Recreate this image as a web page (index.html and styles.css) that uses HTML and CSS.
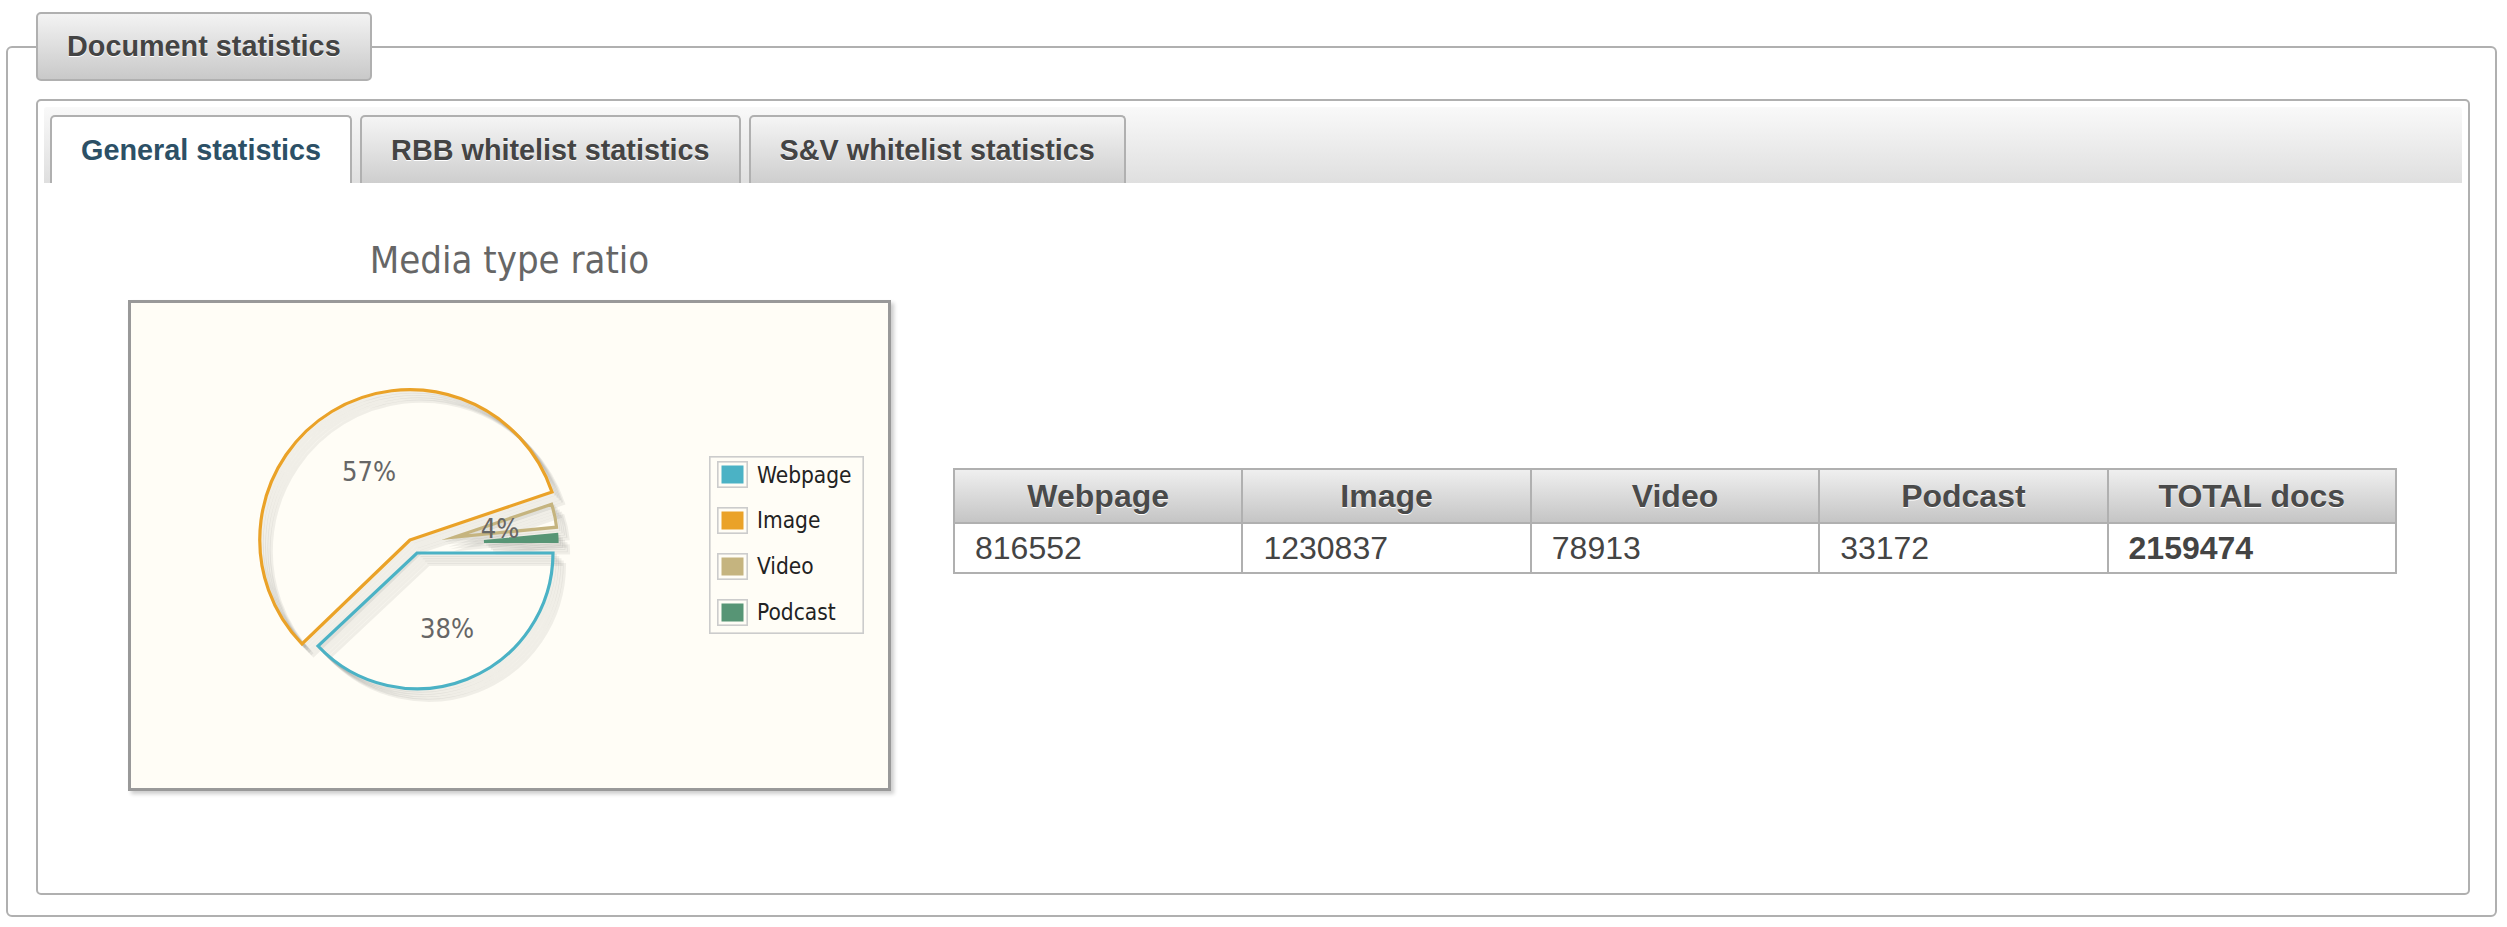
FILE: index.html
```html
<!DOCTYPE html>
<html lang="en">
<head>
<meta charset="utf-8">
<title>Document statistics</title>
<link rel="stylesheet" href="styles.css">
</head>
<body>
<fieldset class="group">
  <legend class="group-title">Document statistics</legend>
  <div class="tabs">
    <ul class="tab-nav">
      <li class="tab active">General statistics</li>
      <li class="tab">RBB whitelist statistics</li>
      <li class="tab">S&amp;V whitelist statistics</li>
    </ul>
    <div class="tab-panel">
      <div class="chart">
        <div class="chart-title">Media type ratio</div>
        <div class="chart-box">
          <svg class="chart-svg" width="757" height="485" viewBox="131 303 757 485" xmlns="http://www.w3.org/2000/svg">
            <defs>
              <path id="sWeb" d="M417 553 L553 553 A136 136 0 0 1 318 646 Z"/>
              <path id="sImg" d="M410 540 L552 492 A150 150 0 1 0 302 644 Z"/>
              <path id="sVid" d="M455 537 L551.6 504.3 A102 102 0 0 1 556.5 527.2 Z"/>
              <path id="sPod" d="M484 541.5 L556.7 534.5 A73 73 0 0 1 557 541.5 Z"/>
            </defs>
            <g class="pie-shadow">
              <g transform="translate(2.3 2.3)"><use href="#sWeb"/><use href="#sImg"/><use href="#sVid"/><use href="#sPod"/></g>
              <g transform="translate(4.6 4.6)"><use href="#sWeb"/><use href="#sImg"/><use href="#sVid"/><use href="#sPod"/></g>
              <g transform="translate(6.9 6.9)"><use href="#sWeb"/><use href="#sImg"/><use href="#sVid"/><use href="#sPod"/></g>
              <g transform="translate(9.2 9.2)"><use href="#sWeb"/><use href="#sImg"/><use href="#sVid"/><use href="#sPod"/></g>
              <g transform="translate(11.5 11.5)"><use href="#sWeb"/><use href="#sImg"/><use href="#sVid"/><use href="#sPod"/></g>
            </g>
            <g class="pie-slices">
              <use href="#sWeb" class="c-web"/>
              <use href="#sImg" class="c-img"/>
              <use href="#sVid" class="c-vid"/>
              <use href="#sPod" class="c-pod fill-pod"/>
            </g>
            <g class="pie-labels">
              <text x="369" y="481">57%</text>
              <text x="447" y="638">38%</text>
              <text x="500" y="538">4%</text>
            </g>
            <g class="legend">
              <rect class="legend-frame" x="709.8" y="456.8" width="153.4" height="176.4"/>
              <rect class="swatch-frame" x="717.8" y="461.8" width="29.4" height="25.4"/>
              <rect x="721.5" y="465.5" width="22" height="18" fill="#4bb2c5"/>
              <text class="legend-text" x="757" y="483">Webpage</text>
              <rect class="swatch-frame" x="717.8" y="507.8" width="29.4" height="25.4"/>
              <rect x="721.5" y="511.5" width="22" height="18" fill="#eaa228"/>
              <text class="legend-text" x="757" y="528">Image</text>
              <rect class="swatch-frame" x="717.8" y="553.8" width="29.4" height="25.4"/>
              <rect x="721.5" y="557.5" width="22" height="18" fill="#c5b47f"/>
              <text class="legend-text" x="757" y="574">Video</text>
              <rect class="swatch-frame" x="717.8" y="599.8" width="29.4" height="25.4"/>
              <rect x="721.5" y="603.5" width="22" height="18" fill="#579575"/>
              <text class="legend-text" x="757" y="620">Podcast</text>
            </g>
          </svg>
        </div>
      </div>
      <table class="stats">
        <thead>
          <tr><th>Webpage</th><th>Image</th><th>Video</th><th>Podcast</th><th>TOTAL docs</th></tr>
        </thead>
        <tbody>
          <tr><td>816552</td><td>1230837</td><td>78913</td><td>33172</td><td class="total">2159474</td></tr>
        </tbody>
      </table>
    </div>
  </div>
</fieldset>
</body>
</html>
```

FILE: styles.css
```css
html, body {
  margin: 0;
  padding: 0;
  background: #fff;
}

body {
  font-family: "Liberation Sans", Arial, sans-serif;
  color: #444;
}

.group {
  margin: 12px 10px 10px 6px;
  padding: 18px 25px 20px 28px;
  border: 2px solid #b0b0b0;
  border-radius: 6px;
  min-width: 0;
}

.group-title {
  padding: 0 29px;
  border: 2px solid #b0b0b0;
  border-radius: 5px;
  background: linear-gradient(#f3f3f3, #c9c9c9);
  font-size: 28.8px;
  font-weight: bold;
  line-height: 65px;
  color: #444;
  text-shadow: 0 1px 0 #fff;
}

.tabs {
  border: 2px solid #b0b0b0;
  border-radius: 5px;
  padding: 6px;
  background: #fff;
}

.tab-nav {
  list-style: none;
  margin: 0;
  padding: 8px 0 0 6px;
  display: flex;
  gap: 8px;
  background: linear-gradient(#f9f9f9, #dfdfdf);
  border-radius: 3px 3px 0 0;
}

.tab {
  box-sizing: border-box;
  height: 68px;
  padding: 0 29px;
  border: 2px solid #b0b0b0;
  border-bottom: 0;
  border-radius: 5px 5px 0 0;
  background: linear-gradient(#f5f5f5, #cecece);
  font-size: 28.8px;
  font-weight: bold;
  line-height: 66px;
  color: #444;
  text-shadow: 0 1px 0 #fff;
  white-space: nowrap;
}

.tab.active {
  background: #fff;
  color: #2c5066;
  text-shadow: none;
}

.tab-panel {
  display: flex;
  align-items: center;
  padding: 55px 0 96px 84px;
}

.chart {
  flex: none;
  width: 763px;
}

.chart-title {
  font-family: "DejaVu Sans Condensed", "DejaVu Sans", sans-serif;
  font-stretch: condensed;
  font-size: 38px;
  line-height: 44px;
  color: #666;
  text-align: center;
  margin-bottom: 18px;
}

.chart-box {
  box-sizing: border-box;
  width: 763px;
  height: 491px;
  border: 3px solid #999;
  background: #fffdf6;
  box-shadow: 3px 3px 4px rgba(0, 0, 0, 0.2);
}

.chart-svg {
  display: block;
}

.pie-shadow {
  fill: none;
  stroke: rgba(0, 0, 0, 0.06);
  stroke-width: 3.2;
  stroke-linejoin: miter;
  stroke-miterlimit: 10;
}

.pie-slices use {
  fill: none;
  stroke-width: 3.2;
  stroke-linejoin: miter;
  stroke-miterlimit: 10;
}

.c-web { stroke: #4bb2c5; }
.c-img { stroke: #eaa228; }
.c-vid { stroke: #c5b47f; }
.c-pod { stroke: #579575; }
.pie-slices .fill-pod { fill: #579575; }

.pie-labels text {
  font-family: "DejaVu Sans Condensed", "DejaVu Sans", sans-serif;
  font-stretch: condensed;
  font-size: 27px;
  fill: #666;
  text-anchor: middle;
}

.legend-frame,
.swatch-frame {
  fill: none;
  stroke: #ccc;
  stroke-width: 1.6;
}

.legend-text {
  font-family: "DejaVu Sans Condensed", "DejaVu Sans", sans-serif;
  font-stretch: condensed;
  font-size: 22.5px;
  fill: #222;
}

.stats {
  flex: none;
  margin-left: 62px;
  margin-top: 13px;
  width: 1444px;
  table-layout: fixed;
  border-collapse: collapse;
  font-size: 32px;
  color: #444;
}

.stats th,
.stats td {
  border: 2px solid #b0b0b0;
}

.stats th {
  padding: 0;
  line-height: 52px;
  background: linear-gradient(#efefef, #c5c5c5);
  font-weight: bold;
  color: #4a4a4a;
  text-shadow: 0 1px 0 #fff;
  text-align: center;
}

.stats td {
  padding: 0 20px;
  line-height: 48px;
  text-align: left;
}

.stats .total {
  font-weight: bold;
}
```
